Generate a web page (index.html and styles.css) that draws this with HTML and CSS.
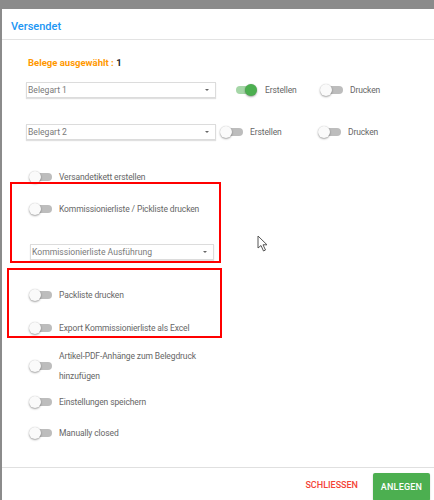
FILE: index.html
```html
<!DOCTYPE html>
<html lang="de">
<head>
<meta charset="utf-8">
<link rel="stylesheet" href="styles.css">
</head>
<body>
<div class="dialog">
  <div class="header"><span class="title">Versendet</span></div>
  <div class="content">
    <div class="count"><span class="count-label">Belege ausgewählt :</span> <span class="count-num">1</span></div>

    <div class="row row1">
      <div class="select"><span>Belegart 1</span><i class="arrow"></i></div>
      <div class="sw-group g1a"><span class="switch on"><span class="track"></span><span class="thumb"></span></span><span class="label">Erstellen</span></div>
      <div class="sw-group"><span class="switch"><span class="track"></span><span class="thumb"></span></span><span class="label">Drucken</span></div>
    </div>

    <div class="row row2">
      <div class="select"><span>Belegart 2</span><i class="arrow"></i></div>
      <div class="sw-group g2a"><span class="switch"><span class="track"></span><span class="thumb"></span></span><span class="label">Erstellen</span></div>
      <div class="sw-group"><span class="switch"><span class="track"></span><span class="thumb"></span></span><span class="label">Drucken</span></div>
    </div>

    <div class="opt o-versand"><span class="switch"><span class="track"></span><span class="thumb"></span></span><span class="label">Versandetikett erstellen</span></div>
    <div class="opt o-komm"><span class="switch"><span class="track"></span><span class="thumb"></span></span><span class="label">Kommissionierliste / Pickliste drucken</span></div>
    <div class="select select-komm"><span>Kommissionierliste Ausführung</span><i class="arrow"></i></div>
    <div class="opt o-pack"><span class="switch"><span class="track"></span><span class="thumb"></span></span><span class="label">Packliste drucken</span></div>
    <div class="opt o-export"><span class="switch"><span class="track"></span><span class="thumb"></span></span><span class="label">Export Kommissionierliste als Excel</span></div>
    <div class="opt o-artikel"><span class="switch"><span class="track"></span><span class="thumb"></span></span><span class="label">Artikel-PDF-Anhänge zum Belegdruck<br>hinzufügen</span></div>
    <div class="opt o-einst"><span class="switch"><span class="track"></span><span class="thumb"></span></span><span class="label">Einstellungen speichern</span></div>
    <div class="opt o-manual"><span class="switch"><span class="track"></span><span class="thumb"></span></span><span class="label">Manually closed</span></div>
  </div>
  <div class="footer">
    <button class="btn-close">SCHLIESSEN</button>
    <button class="btn-add">ANLEGEN</button>
  </div>
</div>
<div class="mark mark1"></div>
<div class="mark mark2"></div>
<svg class="cursor" width="12" height="18" viewBox="0 0 12 18"><path d="M1 1 L1 13 L4 10.5 L6.5 16 L8.5 15 L6 9.8 L10 9.8 Z" fill="#fff" stroke="#555" stroke-width="1" stroke-linejoin="round"/></svg>
</body>
</html>
```

FILE: styles.css
```css
* { box-sizing: border-box; }
html, body { margin: 0; padding: 0; }
body {
  width: 434px;
  height: 500px;
  overflow: hidden;
  background: #8b8b8b;
  font-family: Roboto, "Noto Sans", sans-serif;
  position: relative;
}
.dialog {
  margin: 9px 0 0 2px;
  height: 491px;
  background: #fff;
  display: flex;
  flex-direction: column;
}
.header {
  height: 31px;
  padding: 6px 0 0 9px;
  border-bottom: 1px solid #e3e3e3;
}
.title {
  color: #2196f3;
  font-size: 11px;
  font-weight: 500;
}
.content {
  flex: 1;
  padding: 0 0 0 24px;
  display: flex;
  flex-direction: column;
}
.count {
  margin-top: 16px;
  height: 14px;
  line-height: 14px;
  font-size: 9.5px;
  font-weight: 700;
  padding-left: 2px;
}
.count-label { color: #ff9800; }
.count-num { color: #222; }
.row {
  display: flex;
  align-items: center;
  height: 16px;
}
.row1 { margin-top: 12px; }
.row2 { margin-top: 26px; }
.select {
  position: relative;
  width: 190px;
  height: 16px;
  border: 1px solid #dcdcdc;
  box-shadow: 0 1px 1px rgba(0,0,0,0.12);
  font-size: 8.6px;
  line-height: 14px;
  color: #7a7a7a;
  padding-left: 1px;
  flex: none;
}
.arrow {
  position: absolute;
  right: 6px;
  top: 6px;
  width: 0;
  height: 0;
  border-left: 2.5px solid transparent;
  border-right: 2.5px solid transparent;
  border-top: 2.5px solid #666;
}
.sw-group {
  display: flex;
  align-items: center;
  width: 98px;
}
.g1a { margin-left: 19px; width: 85px; }
.g2a { margin-left: 4px; width: 98px; }
.switch {
  position: relative;
  width: 24px;
  height: 12px;
  flex: none;
}
.track {
  position: absolute;
  left: 3px;
  top: 2px;
  width: 20px;
  height: 8px;
  border-radius: 4px;
  background: #bdbdbd;
}
.thumb {
  position: absolute;
  left: 0;
  top: 0;
  width: 12px;
  height: 12px;
  border-radius: 50%;
  background: #fafafa;
  box-shadow: 0 1px 2px rgba(0,0,0,0.35), 0 0 1px rgba(0,0,0,0.2);
}
.switch.on .track { background: #a5d6a7; left: 1px; }
.switch.on .thumb { left: 10px; background: #4caf50; }
.label {
  margin-left: 6px;
  font-size: 8.5px;
  letter-spacing: -0.12px;
  color: #666;
  line-height: 20px;
}
.opt {
  display: flex;
  align-items: center;
  padding-left: 3px;
}
.o-versand { margin-top: 30px; height: 14px; }
.o-komm { margin-top: 18px; height: 14px; }
.select-komm { margin-top: 28px; margin-left: 4px; width: 184px; }
.o-pack { margin-top: 28px; height: 14px; }
.o-export { margin-top: 19px; height: 14px; }
.o-artikel { margin-top: 11px; height: 40px; }
.o-einst { margin-top: 9px; height: 14px; }
.o-manual { margin-top: 17px; height: 14px; }
.footer {
  height: 33px;
  border-top: 1px solid #e0e0e0;
  display: flex;
  justify-content: flex-end;
  align-items: flex-start;
  padding: 5px 4px 0 0;
}
button {
  font-family: Roboto, sans-serif;
  font-weight: 500;
  font-size: 9px;
  border: none;
  cursor: pointer;
}
.btn-close {
  background: transparent;
  color: #f44336;
  height: 22px;
  margin-top: 1px;
  padding: 0 8px;
}
.btn-add {
  background: #4caf50;
  color: #fff;
  width: 57px;
  height: 28px;
  margin-left: 7px;
  border-radius: 2px;
  box-shadow: 0 1px 2px rgba(0,0,0,0.2);
  letter-spacing: 0.2px;
}
.mark {
  position: absolute;
  border: 2px solid #ff0000;
}
.mark1 { left: 10px; top: 182px; width: 211px; height: 81px; }
.mark2 { left: 7px; top: 268px; width: 215px; height: 70px; }
.cursor {
  position: absolute;
  left: 257px;
  top: 235px;
}
```
